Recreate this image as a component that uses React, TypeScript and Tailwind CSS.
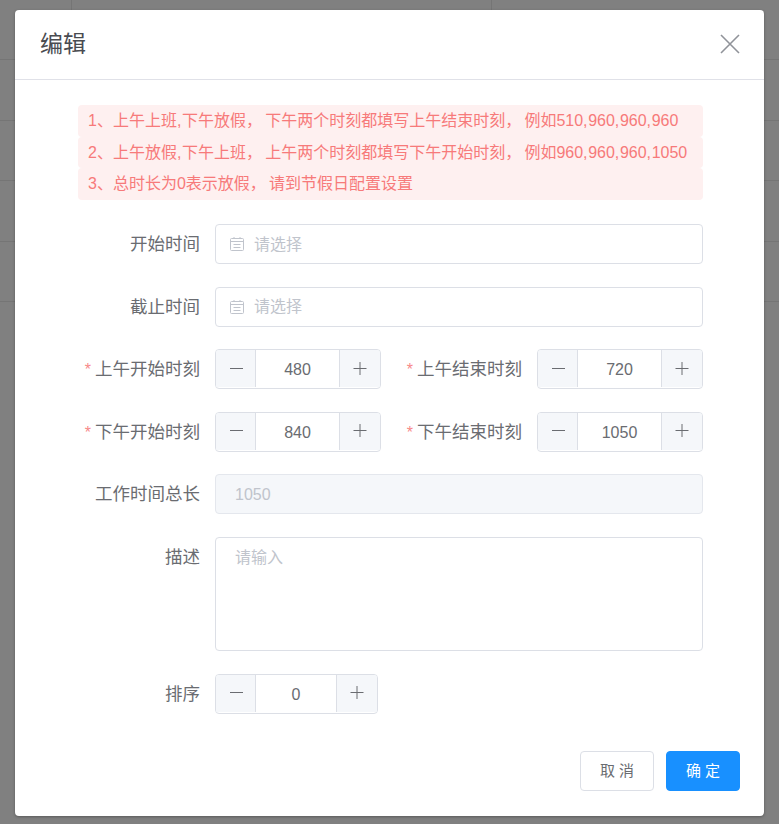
import React from 'react';

const FONT = "font-['Liberation_Sans','Noto_Sans_CJK_SC',sans-serif]";

const notices = [
  '1、上午上班,下午放假，下午两个时刻都填写上午结束时刻，例如510,960,960,960',
  '2、上午放假,下午上班，上午两个时刻都填写下午开始时刻，例如960,960,960,1050',
  '3、总时长为0表示放假，请到节假日配置设置',
];

const rowHeights = ['h-[60px]', 'h-[61px]', 'h-[60px]', 'h-[61px]', 'h-[60px]'];

// commas sit a little wider in the original than in the fallback fonts
const NoticeText: React.FC<{ text: string }> = ({ text }) => (
  <>
    {text.split(/([，,])/).map((part, i) =>
      part === '，' ? (
        <span key={i} className="mr-[3.2px]">{part}</span>
      ) : part === ',' ? (
        <span key={i} className="mr-[0.6px]">{part}</span>
      ) : (
        part
      )
    )}
  </>
);

const Label: React.FC<{ text: string; required?: boolean; width?: string }> = ({ text, required, width = 'w-[137px]' }) => (
  <label className={`${width} shrink-0 pr-[15px] text-right text-[17.5px] leading-[40px] text-[#6a6c71] whitespace-nowrap`}>
    {required && <span className="mr-1 text-[16px] text-[#f78989]">*</span>}
    {text}
  </label>
);

const CalendarIcon = () => (
  <svg width="14" height="14" viewBox="0 0 14 14" fill="none" stroke="#c0c4cc" strokeWidth="1" className="mr-[10px] shrink-0">
    <rect x="0.5" y="1.5" width="13" height="12" rx="1" />
    <path d="M0.5 4.5h13M3.5 7.5h7M3.5 10.5h7M4 0v2M10 0v2" />
  </svg>
);

const DateField: React.FC<{ label: string }> = ({ label }) => (
  <div className="flex h-10">
    <Label text={label} />
    <div className="flex h-10 flex-1 items-center rounded-[4px] border border-[#dcdfe6] bg-white pl-[14px] text-[16px] text-[#c0c4cc]">
      <CalendarIcon />
      <span className="pt-[1px]">请选择</span>
    </div>
  </div>
);

const Stepper: React.FC<{ value: string; width?: string }> = ({ value, width = 'w-[166px]' }) => (
  <div className={`flex h-10 ${width} shrink-0 overflow-hidden rounded-[4px] border border-[#dcdfe6] bg-white`}>
    <span className="mb-[1px] flex w-10 shrink-0 items-center justify-center border-r border-[#dcdfe6] bg-[#f5f7fa]">
      <svg width="14" height="14" viewBox="0 0 14 14" stroke="#6a6c71" strokeWidth="1"><path d="M1 6.5h13" /></svg>
    </span>
    <span className="flex-1 text-center text-[16px] leading-[40px] text-[#6a6c71]">{value}</span>
    <span className="mb-[1px] flex w-[41px] shrink-0 items-center justify-center border-l border-[#dcdfe6] bg-[#f5f7fa]">
      <svg width="14" height="14" viewBox="0 0 14 14" stroke="#6a6c71" strokeWidth="1"><path d="M0.5 6.5h13M7 0v13" /></svg>
    </span>
  </div>
);

const StepperRow: React.FC<{ left: [string, string]; right: [string, string] }> = ({ left, right }) => (
  <div className="flex h-10">
    <Label text={left[0]} required />
    <Stepper value={left[1]} />
    <Label text={right[0]} required width="w-[156px]" />
    <Stepper value={right[1]} />
  </div>
);

const BackgroundTable = () => (
  <div className="h-[824px] overflow-hidden bg-[#808080]">
    {rowHeights.map((h, i) => (
      <div key={i} className={`flex ${h} border-b border-[#757575]`}>
        <div className="w-[72px] border-r border-[#757575]" />
        <div className="w-[420px] border-r border-[#757575]" />
      </div>
    ))}
  </div>
);

export default function App() {
  return (
    <div className={`relative h-[824px] overflow-hidden ${FONT}`}>
      <BackgroundTable />
      <div className="absolute inset-x-[15px] top-[10px] h-[806px] rounded-[4px] bg-white shadow-[0_1px_3px_rgba(0,0,0,0.3)]">
        <div className="flex h-[70px] items-center justify-between border-b border-[#e0e1e8] pl-[25px] pr-6">
          <h2 className="text-[23px] font-normal text-[#494b50]">编辑</h2>
          <svg width="20" height="20" viewBox="0 0 20 20" stroke="#909399" strokeWidth="1.6" className="-mt-[1px]">
            <path d="M1 1l18 18M19 1L1 19" />
          </svg>
        </div>

        <div className="pl-[63px] pr-[61px] pt-[25px]">
          <div>
            {notices.map((n, i) => (
              <div key={i} className="h-[31.5px] rounded-[4px] bg-[#fef0f0] pl-[10px] text-[16px] leading-[32px] text-[#f77a7a] whitespace-nowrap">
                <NoticeText text={n} />
              </div>
            ))}
          </div>

          <div className="mt-[24.5px] flex flex-col gap-[22.5px]">
            <DateField label="开始时间" />
            <DateField label="截止时间" />
            <StepperRow left={['上午开始时刻', '480']} right={['上午结束时刻', '720']} />
            <StepperRow left={['下午开始时刻', '840']} right={['下午结束时刻', '1050']} />
            <div className="flex h-10">
              <Label text="工作时间总长" />
              <div className="flex-1 rounded-[4px] border border-[#e4e7ed] bg-[#f5f7fa] pl-[19px] text-[16px] leading-[39px] text-[#c0c4cc]">1050</div>
            </div>
            <div className="flex h-[114.5px]">
              <Label text="描述" />
              <div className="flex-1 rounded-[4px] border border-[#dcdfe6] bg-white pl-[19px] pt-[6px] text-[16px] leading-[28px] text-[#c0c4cc]">请输入</div>
            </div>
            <div className="flex h-10">
              <Label text="排序" />
              <Stepper value="0" width="w-[163px]" />
            </div>
          </div>
        </div>

        <div className="absolute bottom-[25px] right-6 flex gap-3">
          <button className="h-10 w-[74px] rounded-[4px] border border-[#dcdfe6] bg-white text-[15px] text-[#6a6c71]">取 消</button>
          <button className="h-10 w-[74px] rounded-[4px] border border-[#1890ff] bg-[#1890ff] text-[15px] text-white">确 定</button>
        </div>
      </div>
    </div>
  );
}
